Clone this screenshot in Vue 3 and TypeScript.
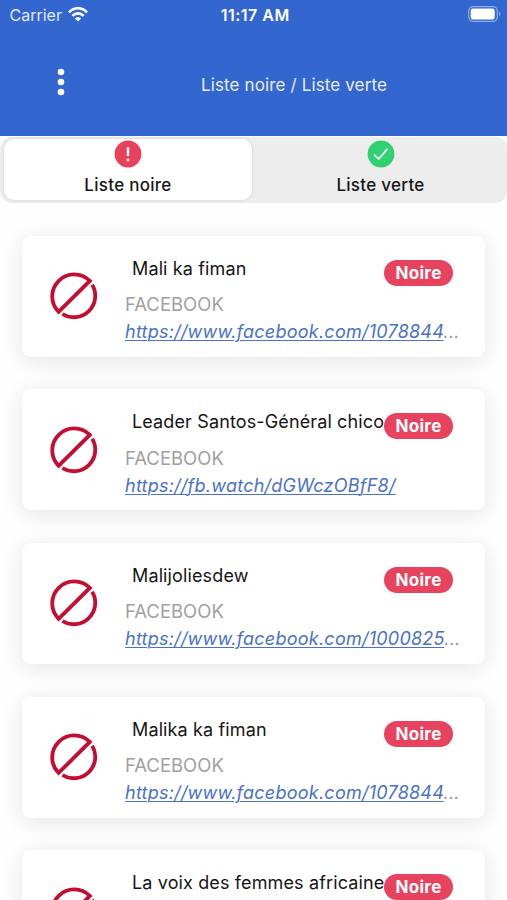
<script setup lang="ts">
interface Page {
  name: string
  network: string
  url: string
  truncated: boolean
}

const pages: Page[] = [
  { name: 'Mali ka fiman', network: 'FACEBOOK', url: 'https://www.facebook.com/1078844', truncated: true },
  { name: 'Leader Santos-Général chico', network: 'FACEBOOK', url: 'https://fb.watch/dGWczOBfF8/', truncated: false },
  { name: 'Malijoliesdew', network: 'FACEBOOK', url: 'https://www.facebook.com/1000825', truncated: true },
  { name: 'Malika ka fiman', network: 'FACEBOOK', url: 'https://www.facebook.com/1078844', truncated: true },
  { name: 'La voix des femmes africaine', network: '', url: '', truncated: false },
]
</script>

<template>
  <div class="screen">
    <header class="header">
      <div class="status">
        <div class="carrier">
          <span>Carrier</span>
          <svg class="wifi" viewBox="0 0 20 15" width="20" height="15" fill="none" stroke="#fff" stroke-width="2.6">
            <path d="M1 5.3C6-.1 14-.1 19 5.3" />
            <path d="M4.3 8.8c3.3-3.3 8.1-3.3 11.4 0" />
            <path d="M10 14.6 6.9 11.5c1.8-1.7 4.4-1.7 6.2 0z" fill="#fff" stroke="none" />
          </svg>
        </div>
        <div class="time">11:17 AM</div>
        <div class="battery">
          <svg viewBox="0 0 33 16" width="33" height="16">
            <rect x=".7" y=".7" width="28.6" height="14.6" rx="4.2" fill="none" stroke="#91aee6" stroke-width="1.2" />
            <rect x="2.7" y="2.6" width="24" height="10.8" rx="2.2" fill="#fff" />
            <path d="M31 5.6c1.7.8 1.7 4 0 4.8z" fill="#91aee6" />
          </svg>
        </div>
      </div>
      <div class="bar">
        <svg class="menu" viewBox="0 0 8 28" width="8" height="28" fill="#fff">
          <circle cx="4" cy="4" r="3.3" />
          <circle cx="4" cy="14" r="3.3" />
          <circle cx="4" cy="24" r="3.3" />
        </svg>
        <h1 class="title">Liste noire / Liste verte</h1>
      </div>
    </header>

    <nav class="tabs">
      <div class="tab active">
        <svg viewBox="0 0 28 28" width="28" height="28">
          <circle cx="14" cy="14" r="13.4" fill="#e8425a" />
          <path d="M14 7.3v8.6" stroke="#fff" stroke-width="2.4" />
          <circle cx="14" cy="20" r="1.4" fill="#fff" />
        </svg>
        <span class="label">Liste noire</span>
      </div>
      <div class="tab">
        <svg viewBox="0 0 28 28" width="28" height="28">
          <circle cx="14" cy="14" r="13.4" fill="#2fd171" />
          <path d="m7.2 14.6 4.5 4.5 8.7-10.2" fill="none" stroke="#fff" stroke-width="1.7" />
        </svg>
        <span class="label">Liste verte</span>
      </div>
    </nav>

    <main class="list">
      <article v-for="page in pages" :key="page.name" class="card">
        <svg class="ban" viewBox="0 0 48 48" width="48" height="48" fill="none" stroke="#c30d32" stroke-width="3.8">
          <path d="M8.6 39.9A21.5 21.5 0 0 1 39.8 8.9Z" />
          <path d="M42.2 12.7A21.5 21.5 0 0 1 12.4 42" />
        </svg>
        <div class="body">
          <div class="top">
            <div class="name">{{ page.name }}</div>
            <span class="badge">Noire</span>
          </div>
          <div class="network">{{ page.network }}</div>
          <div class="link"><a>{{ page.url }}</a><span v-if="page.truncated">...</span></div>
        </div>
      </article>
    </main>
  </div>
</template>

<style>
body {
  background: #fff;
  overflow: hidden;
}
</style>

<style scoped>
.screen {
  width: 507px;
  height: 900px;
  overflow: hidden;
  background: #fefefe;
  font-family: Inter, 'Liberation Sans', sans-serif;
}
.header {
  height: 135.5px;
  background: #3366cf;
  color: #fff;
}
.status {
  display: grid;
  grid-template-columns: 1fr auto 1fr;
  align-items: center;
  height: 29px;
  padding: 0 6px 0 9.5px;
  box-sizing: border-box;
}
.carrier {
  display: flex;
  align-items: center;
  gap: 6px;
  font-size: 16px;
  color: #e2eaf9;
}
.wifi {
  margin-top: -1px;
}
.time {
  font-size: 16px;
  font-weight: 600;
  letter-spacing: 0.5px;
}
.battery {
  display: flex;
  justify-content: flex-end;
  margin-top: -1px;
}
.bar {
  display: flex;
  padding: 38.5px 0 0 57px;
}
.title {
  margin: 6px 0 0 136px;
  font-size: 17px;
  line-height: 22px;
  font-weight: 400;
  letter-spacing: 0.13px;
  color: #e7eefb;
}
.tabs {
  display: grid;
  grid-template-columns: 248px 1fr;
  gap: 2px;
  height: 66px;
  margin-top: 1px;
  padding: 2px 0 3px 4px;
  box-sizing: border-box;
  border-radius: 12px;
  background: #ededed;
}
.tab {
  display: flex;
  flex-direction: column;
  align-items: center;
  padding-top: 1.4px;
  border-radius: 10px;
}
.tab.active {
  background: #fff;
  box-shadow: 0 0 3px rgba(0, 0, 0, 0.14);
}
.label {
  margin-top: 6.2px;
  font-size: 17px;
  line-height: 22px;
  font-weight: 500;
  letter-spacing: 0.28px;
  color: #171717;
}
.list {
  display: flex;
  flex-direction: column;
  gap: 32.7px;
  padding: 33px 22px 0;
}
.card {
  display: flex;
  height: 121px;
  flex-shrink: 0;
  padding: 0 0 0 28px;
  box-sizing: border-box;
  border-radius: 9px;
  background: #fff;
  box-shadow: 0 4px 22px rgba(0, 0, 0, 0.1);
}
.ban {
  flex: none;
  margin-top: 36.5px;
}
.body {
  margin-left: 27px;
  width: 340px;
  white-space: nowrap;
}
.top {
  display: flex;
  height: 55.4px;
  padding: 21px 0 0 7px;
  box-sizing: border-box;
}
.name {
  width: 252px;
  font-size: 18px;
  line-height: 24px;
  letter-spacing: 0.13px;
  color: #151515;
}
.badge {
  width: 69px;
  height: 26px;
  margin-top: 3.2px;
  border-radius: 13px;
  background: #e8435e;
  color: #fff;
  font-size: 17px;
  line-height: 26px;
  font-weight: 700;
  letter-spacing: 0.3px;
  text-align: center;
}
.network {
  font-size: 18.5px;
  line-height: 26px;
  color: #a0a0a0;
}
.link {
  font-size: 18px;
  line-height: 29.8px;
  font-style: italic;
  letter-spacing: 0.24px;
  color: #999;
}
.link a {
  color: #4972c6;
  text-decoration: underline;
  text-decoration-thickness: 1px;
  text-underline-offset: 2px;
}
</style>
